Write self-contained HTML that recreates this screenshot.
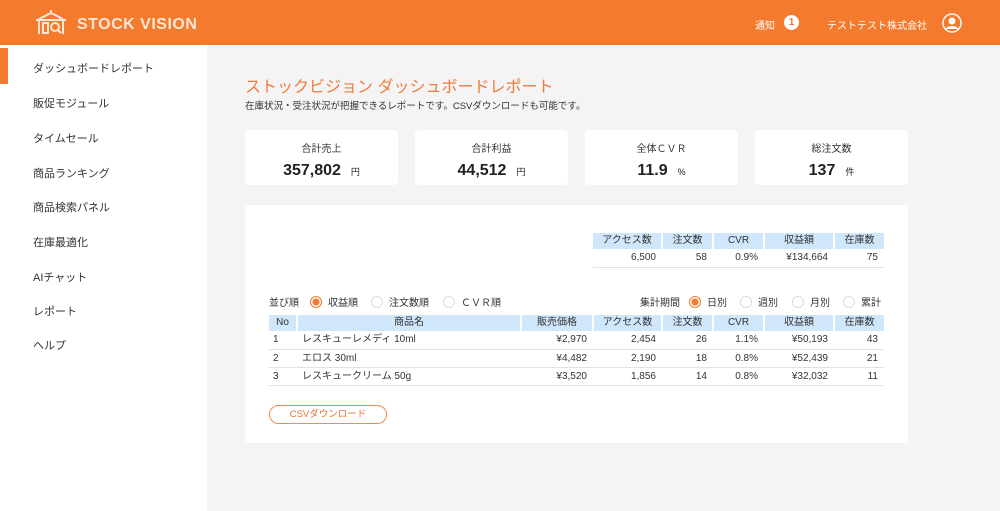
<!DOCTYPE html>
<html><head><meta charset="utf-8"><style>
*{margin:0;padding:0;box-sizing:border-box}
body{width:1000px;height:511px;overflow:hidden;background:#f4f4f4;font-family:"Liberation Sans","Noto Sans CJK JP",sans-serif;color:#333;position:relative}
.hdr{position:absolute;left:0;top:0;width:1000px;height:45px;background:#f47a2e;color:#fff}
.logo{position:absolute;left:77px;top:16px;font-size:16px;font-weight:bold;letter-spacing:0.5px;color:#fde8d8}
.side{position:absolute;left:0;top:45px;width:207px;height:466px;background:#fff}
.side div{position:absolute;left:33px;font-size:11px;color:#333}
.bar{position:absolute;left:0;top:48px;width:8px;height:36px;background:#f47a2e}
.abs{position:absolute}
.card{position:absolute;top:130px;width:153px;height:55px;background:#fff;border-radius:4px;text-align:center}
.card .t{font-size:10px;margin-top:10px}
.card .v{font-size:16px;font-weight:bold;margin-top:7px;color:#222}
.card .v span{font-size:9px;font-weight:normal;margin-left:10px}
.panel{position:absolute;left:245px;top:205px;width:663px;height:238px;background:#fff}
table{position:absolute;border-collapse:collapse;font-size:10px;table-layout:fixed}
th{background:#cfe6fb;font-weight:normal;height:16px;line-height:16px;border-right:2px solid #fff;text-align:center;vertical-align:middle;padding:0}
td{height:18px;line-height:17px;border-bottom:1px solid #e2e2e2;text-align:right;padding:0 6px 0 0;vertical-align:middle}
.r{display:inline-block;width:12px;height:12px;border-radius:50%;border:1px solid #ddd;vertical-align:-2px;margin-right:6px}
.r.on{border-color:#f47a2e;background:radial-gradient(#f47a2e 3px,#fff 4px)}
.opt{position:absolute;font-size:10px;top:294px}
</style></head><body>
<div class="hdr">
<svg class="abs" style="left:33px;top:9px" width="36" height="26" viewBox="0 0 36 26" fill="none" stroke="#fde8d8" stroke-width="2"><path d="M18 1v3M6 10l12-6 12 6M3 11h30M6 11v14M30 11v14M10 14h5v10h-5z"/><circle cx="22" cy="18" r="4"/><path d="M25 21l3 3"/></svg>
<div class="logo">STOCK VISION</div>
<div class="abs" style="left:755px;top:17px;font-size:10px">通知</div>
<div class="abs" style="left:784px;top:15px;width:15px;height:15px;border-radius:50%;background:#fff;color:#f47a2e;font-size:10px;font-weight:bold;text-align:center;line-height:15px">1</div>
<div class="abs" style="left:827px;top:17px;font-size:10px">テストテスト株式会社</div>
<svg class="abs" style="left:942px;top:13px" width="20" height="20" viewBox="0 0 20 20"><circle cx="10" cy="10" r="9" fill="none" stroke="#fff" stroke-width="1.5"/><circle cx="10" cy="8" r="3.5" fill="#fff"/><path d="M4 16c1-4 11-4 12 0z" fill="#fff"/></svg>
</div>
<div class="side">
<div style="top:15px">ダッシュボードレポート</div>
<div style="top:50px">販促モジュール</div>
<div style="top:85px">タイムセール</div>
<div style="top:120px">商品ランキング</div>
<div style="top:154px">商品検索パネル</div>
<div style="top:189px">在庫最適化</div>
<div style="top:224px">AIチャット</div>
<div style="top:258px">レポート</div>
<div style="top:292px">ヘルプ</div>
</div>
<div class="bar"></div>
<div class="abs" style="left:245px;top:73px;font-size:16px;color:#f07a3a">ストックビジョン ダッシュボードレポート</div>
<div class="abs" style="left:245px;top:98px;font-size:9.5px">在庫状況・受注状況が把握できるレポートです。CSVダウンロードも可能です。</div>
<div class="card" style="left:245px"><div class="t">合計売上</div><div class="v">357,802<span>円</span></div></div>
<div class="card" style="left:415px"><div class="t">合計利益</div><div class="v">44,512<span>円</span></div></div>
<div class="card" style="left:585px"><div class="t">全体ＣＶＲ</div><div class="v">11.9<span>%</span></div></div>
<div class="card" style="left:755px"><div class="t">総注文数</div><div class="v">137<span>件</span></div></div>
<div class="panel"></div>
<table style="left:593px;top:233px;width:291px">
<tr><th style="width:69px">アクセス数</th><th style="width:51px">注文数</th><th style="width:51px">CVR</th><th style="width:70px">収益額</th><th style="width:50px;border-right:0">在庫数</th></tr>
<tr><td>6,500</td><td>58</td><td>0.9%</td><td>¥134,664</td><td>75</td></tr>
</table>
<div class="opt" style="left:269px">並び順</div>
<div class="opt" style="left:310px"><span class="r on"></span>収益順</div>
<div class="opt" style="left:371px"><span class="r"></span>注文数順</div>
<div class="opt" style="left:443px"><span class="r"></span>ＣＶＲ順</div>
<div class="opt" style="left:640px">集計期間</div>
<div class="opt" style="left:689px"><span class="r on"></span>日別</div>
<div class="opt" style="left:740px"><span class="r"></span>週別</div>
<div class="opt" style="left:792px"><span class="r"></span>月別</div>
<div class="opt" style="left:843px"><span class="r"></span>累計</div>
<table style="left:269px;top:315px;width:615px">
<tr><th style="width:28px">No</th><th style="width:224px">商品名</th><th style="width:72px">販売価格</th><th style="width:69px">アクセス数</th><th style="width:51px">注文数</th><th style="width:51px">CVR</th><th style="width:70px">収益額</th><th style="width:50px;border-right:0">在庫数</th></tr>
<tr><td style="text-align:left;padding-left:4px">1</td><td style="text-align:left;padding-left:5px">レスキューレメディ 10ml</td><td>¥2,970</td><td>2,454</td><td>26</td><td>1.1%</td><td>¥50,193</td><td>43</td></tr>
<tr><td style="text-align:left;padding-left:4px">2</td><td style="text-align:left;padding-left:5px">エロス 30ml</td><td>¥4,482</td><td>2,190</td><td>18</td><td>0.8%</td><td>¥52,439</td><td>21</td></tr>
<tr><td style="text-align:left;padding-left:4px">3</td><td style="text-align:left;padding-left:5px">レスキュークリーム 50g</td><td>¥3,520</td><td>1,856</td><td>14</td><td>0.8%</td><td>¥32,032</td><td>11</td></tr>
</table>
<div class="abs" style="left:269px;top:405px;width:118px;height:19px;border:1px solid #f08a50;border-radius:10px;color:#e0703a;font-size:9.5px;text-align:center;line-height:17px">CSVダウンロード</div>
</body></html>
